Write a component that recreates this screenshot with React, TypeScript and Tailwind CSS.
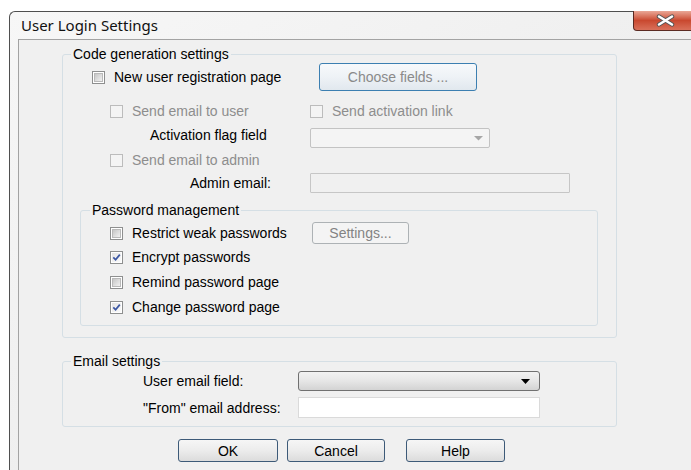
import React from "react";

type CheckProps = { checked?: boolean; disabled?: boolean };

function Check({ checked = false, disabled = false }: CheckProps) {
  if (disabled) {
    return (
      <span className="w-[13px] h-[13px] shrink-0 border border-[#bcbcbc] bg-[#f4f4f4]" />
    );
  }
  return (
    <span className="w-[13px] h-[13px] shrink-0 border border-[#8e8f8f] bg-white p-[1px] flex">
      <span
        className={
          checked
            ? "relative flex-1 bg-gradient-to-br from-[#e4e4e4] to-[#fbfbfb]"
            : "relative flex-1 bg-gradient-to-br from-[#c6c6c6] via-[#dcdcdc] to-[#f1f1f1] border border-[#b9b9b9]"
        }
      >
        {checked && (
          <svg
            width="9"
            height="9"
            viewBox="0 0 9 9"
            className="absolute left-0 top-0"
          >
            <path
              d="M1.3 4.4 L3.6 6.8 L7.8 1.6"
              fill="none"
              stroke="#3b56a3"
              strokeWidth="1.7"
            />
          </svg>
        )}
      </span>
    </span>
  );
}

function CheckItem({
  label,
  checked,
  disabled,
}: {
  label: string;
  checked?: boolean;
  disabled?: boolean;
}) {
  return (
    <label className="flex items-center gap-[9px] whitespace-nowrap">
      <Check checked={checked} disabled={disabled} />
      <span className={disabled ? "text-[#8d8d8d]" : "text-black"}>{label}</span>
    </label>
  );
}

function GroupBox({
  title,
  legendClass,
  className,
  children,
}: {
  title: string;
  legendClass: string;
  className: string;
  children: React.ReactNode;
}) {
  return (
    <fieldset className={`border border-[#d5dfe5] rounded-[3px] ${className}`}>
      <legend className={`px-[2px] leading-[16px] ${legendClass}`}>{title}</legend>
      {children}
    </fieldset>
  );
}

function DialogButton({ label, className }: { label: string; className: string }) {
  return (
    <button
      className={`h-[23px] rounded-[3px] border border-[#3d5a78] bg-gradient-to-b from-[#f6f6f6] via-[#ececec] to-[#dcdcdc] text-black text-[14px] leading-[16px] ${className}`}
    >
      {label}
    </button>
  );
}

export default function App() {
  return (
    <div className="w-[691px] h-[470px] overflow-hidden bg-white pt-[11px] pl-[9px] font-['Liberation_Sans',Arial,sans-serif] text-[14px] leading-[16px] text-black">
      <div className="w-[700px] h-[470px] border-l border-t border-[#4f4f4f] rounded-tl-[6px] bg-gradient-to-br from-[#f7f7f7] via-[#efefef] to-[#f3f3f3] flex flex-col">
        {/* title bar */}
        <div className="h-[27px] shrink-0 flex items-start">
          <span className="pl-[11px] pt-[4px] font-['Noto_Sans',sans-serif] text-[15px] leading-[18px] text-[#111]">
            User Login Settings
          </span>
          <div className="ml-auto mr-[12px] -mt-[1px] w-[64px] h-[20px] rounded-b-[4px] border border-t-0 border-[#5b2a22] bg-gradient-to-b from-[#e9a796] via-[#c9482f] to-[#d9705a] flex items-center justify-center">
            <svg width="19" height="13" viewBox="0 0 19 13">
              <path
                d="M3 2.5 L16 10.5 M16 2.5 L3 10.5"
                stroke="#555555"
                strokeWidth="4.4"
                strokeLinecap="round"
              />
              <path
                d="M3 2.5 L16 10.5 M16 2.5 L3 10.5"
                stroke="#ffffff"
                strokeWidth="2.5"
                strokeLinecap="round"
              />
            </svg>
          </div>
        </div>

        {/* client area */}
        <div className="ml-[8px] flex-1 border-l border-t border-[#a3a3a3] bg-[#f0f0f0] flex flex-col items-start">
          <GroupBox
            title="Code generation settings"
            legendClass="ml-[8px]"
            className="ml-[43px] mt-[6px] w-[555px] pb-[11px]"
          >
            <div className="mt-[1px] h-[28px] pl-[29px] flex items-center">
              <div className="w-[227px] shrink-0">
                <CheckItem label="New user registration page" />
              </div>
              <button className="w-[158px] h-[28px] rounded-[3px] border border-[#3c7fb1] bg-gradient-to-b from-[#f7f9fb] via-[#eef2f6] to-[#e1e8ee] text-[#8a8a8a] text-[14px] leading-[16px]">
                Choose fields ...
              </button>
            </div>

            <div className="mt-[10px] h-[20px] pl-[47px] flex items-center">
              <div className="w-[200px] shrink-0">
                <CheckItem label="Send email to user" disabled />
              </div>
              <CheckItem label="Send activation link" disabled />
            </div>

            <div className="mt-[7px] h-[20px] flex items-start">
              <div className="w-[247px] shrink-0 pl-[87px] leading-[14px]">Activation flag field</div>
              <div className="w-[180px] h-[20px] rounded-[2px] border border-[#c3c3c3] bg-[#f4f4f4] flex items-center justify-end pr-[6px]">
                <svg width="9" height="5" viewBox="0 0 9 5">
                  <path d="M0 0 H9 L4.5 4.5 Z" fill="#a6a6a6" />
                </svg>
              </div>
            </div>

            <div className="mt-[2px] h-[20px] pl-[47px] flex items-center">
              <CheckItem label="Send email to admin" disabled />
            </div>

            <div className="mt-[3px] h-[20px] flex items-center">
              <div className="w-[247px] shrink-0 pl-[127px]">Admin email:</div>
              <div className="w-[260px] h-[20px] border border-[#c6c6c6] bg-[#f0f0f0] rounded-[1px]" />
            </div>

            <GroupBox
              title="Password management"
              legendClass="ml-[9px]"
              className="ml-[17px] mt-[9px] w-[518px] pb-[6px]"
            >
              <div className="mt-[3px] h-[24px] pl-[29px] flex items-center">
                <div className="w-[202px] shrink-0">
                  <CheckItem label="Restrict weak passwords" />
                </div>
                <button className="w-[97px] h-[22px] rounded-[3px] border border-[#adb2b5] bg-[#f4f4f4] text-[#838383] text-[14px] leading-[16px]">
                  Settings...
                </button>
              </div>
              <div className="h-[24px] pl-[29px] flex items-center">
                <CheckItem label="Encrypt passwords" checked />
              </div>
              <div className="mt-[1px] h-[24px] pl-[29px] flex items-center">
                <CheckItem label="Remind password page" />
              </div>
              <div className="mt-[1px] h-[24px] pl-[29px] flex items-center">
                <CheckItem label="Change password page" checked />
              </div>
            </GroupBox>
          </GroupBox>

          <GroupBox
            title="Email settings"
            legendClass="ml-[8px]"
            className="ml-[43px] mt-[15px] w-[555px] pb-[8px]"
          >
            <div className="mt-[2px] h-[20px] flex items-center">
              <div className="w-[235px] shrink-0 pl-[80px]">User email field:</div>
              <div className="w-[242px] h-[20px] rounded-[3px] border border-[#707070] bg-gradient-to-b from-[#f2f2f2] via-[#e6e6e6] to-[#d3d3d3] flex items-center justify-end pr-[9px]">
                <svg width="9" height="5" viewBox="0 0 9 5">
                  <path d="M0 0 H9 L4.5 5 Z" fill="#000" />
                </svg>
              </div>
            </div>
            <div className="mt-[6px] h-[21px] flex items-center">
              <div className="w-[235px] shrink-0 pl-[80px]">"From" email address:</div>
              <div className="w-[242px] h-[21px] border border-[#dadada] bg-white" />
            </div>
          </GroupBox>

          <div className="mt-[12px] ml-[159px] flex">
            <DialogButton label="OK" className="w-[100px]" />
            <DialogButton label="Cancel" className="ml-[9px] w-[98px]" />
            <DialogButton label="Help" className="ml-[21px] w-[99px]" />
          </div>
        </div>
      </div>
    </div>
  );
}
